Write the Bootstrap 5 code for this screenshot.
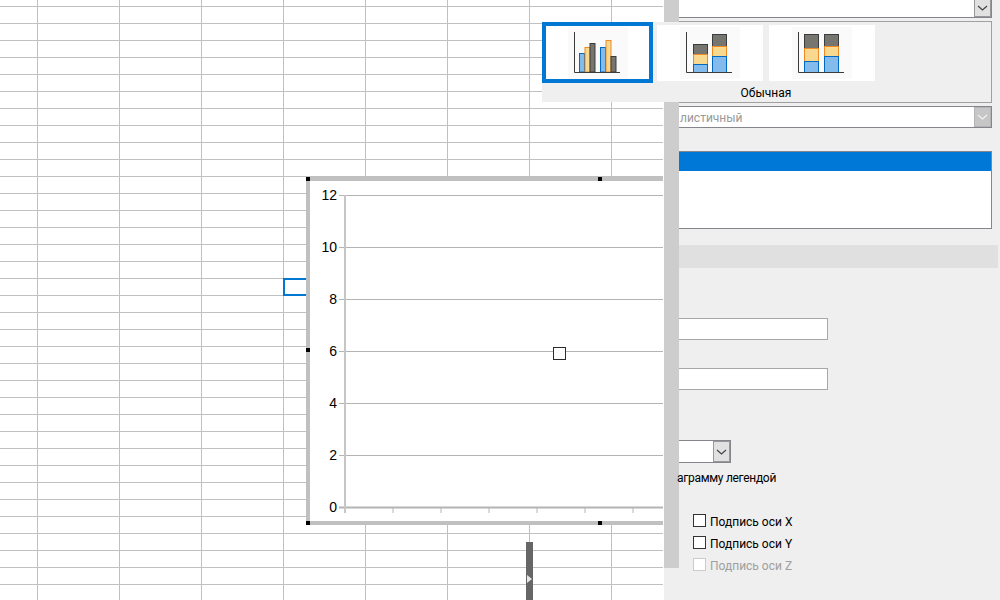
<!DOCTYPE html>
<html lang="ru">
<head>
<meta charset="utf-8">
<title>Диаграмма</title>
<link rel="stylesheet" href="https://cdn.jsdelivr.net/npm/bootstrap@5.3.0/dist/css/bootstrap.min.css">
<style>
html,body{margin:0;height:100%;overflow:hidden;background:#fff}
.app-root{width:1000px;height:600px;font-family:Roboto,"Noto Sans",sans-serif;font-size:12px;line-height:16px;color:#000;background:#fff}
.sheet-area{width:663px;height:600px;margin-right:1px;background-color:#fff;
 background-image:linear-gradient(to right,transparent 81px,#c0c0c0 81px),linear-gradient(to bottom,transparent 16px,#c0c0c0 16px);
 background-size:82px 100%,100% 17px;background-position:-44px 0,0 -10px}
.cell-cursor{left:283px;top:278px;width:30px;height:18px;border:2px solid #0078d4}
.chart-frame{left:306px;top:176px;width:400px;height:349px;background:#fff;border:solid #c0c0c0;border-width:5px 4px 4px 4px}
.chart-frame svg{display:block}
.chart-frame text{font-family:"Liberation Sans",sans-serif;font-size:14px;fill:#000;text-anchor:end}
.grab{width:4px;height:4px;background:#000}
.grab-tl{left:-4px;top:-4px}
.grab-tm{left:288px;top:-4px}
.grab-ml{left:-4px;top:167px}
.grab-bl{left:-4px;bottom:-4px}
.grab-bm{left:288px;bottom:-4px}
.data-point{left:553px;top:347px;width:13px;height:13px;background:#fff;border:1px solid #2b2b2b}
.split-bar{left:526px;top:542px;width:7px;height:58px;background:#666}
.split-bar svg{display:block;margin:33px 0 0 1px}
.side-panel{width:336px;height:600px;background:#efefef}
.fake-scroll{width:15px;height:568px;background:#cdcdcd;flex:none}
.side-body{width:313px;flex:none}
.combo-box{background:#fff;border:solid #85868c;border-width:1px 1px 1px 0;color:#999;padding-left:1px}
.combo-top{height:18px;border-top:0}
.combo-mid{height:22px;margin-top:3px}
.combo-mid span{padding-top:1px}
.combo-low{height:23px;width:52px;margin-top:50px}
.combo-btn{width:17px;background:#c6c6c6;border:1px solid #b4b4b6}
.combo-enabled .combo-btn{background:#e1e1e1;border-color:#98989c}
.combo-top .combo-btn{border-top:0}
.gallery-frame{height:82px;margin-top:3px;border:1px solid #a0a0a0;border-left:0}
.chart-list{height:78px;margin-top:23px;background:#fff;border:solid #85868c;border-width:1px 1px 1px 0}
.chart-list-active{height:19px;background:#0078d7}
.group-band{width:319px;height:23px;margin-top:16px;background:#e0e0e0}
.name-input.form-control{width:149px;height:22px;padding:0;border:solid #a8a8ac;border-width:1px 1px 1px 0;border-radius:0;background:#fff}
.name-first.form-control{margin-top:50px}
.name-second.form-control{margin-top:28px}
.legend-note{margin-top:7px;margin-left:-2px;height:16px;white-space:nowrap;letter-spacing:-.3px}
.axis-list{margin:28px 0 0 14px;gap:9px}
.axis-item{height:13px;gap:4px;line-height:13px}
.axis-item span{padding-top:3px}
.axis-item.disabled-item{color:#a0a0a0}
.tick-box.form-check-input{width:13px;height:13px;margin:0;border:1px solid #333;border-radius:0;background-color:#fff;opacity:1;flex:none}
.disabled-item .tick-box.form-check-input{border-color:#ccc}
.gallery-pop{left:542px;top:22px;width:448px;height:80px;background:#efefef}
.gallery-row{height:61px}
.gal-tile{background:#fff;flex:none}
.gal-selected{width:111px;height:61px;border:4px solid #0078d4}
.gal-plain{width:106px;height:56px;margin-top:3px}
.gal-second{margin-left:4px}
.gal-third{margin-left:6px}
.gal-tile svg{display:block;background:#fafafa}
.gal-selected svg{margin-top:1px}
.gal-plain svg{margin-top:2px}
.gal-title{height:19px;line-height:19px;padding-top:1px}
.bar-b{fill:#83bbec;stroke:#0369c0}
.bar-o{fill:#f9d88f;stroke:#f08a24}
.bar-g{fill:#77756f;stroke:#3c3c3c}
.axis-stroke{stroke:#3c3c3c;fill:none}
</style>
</head>
<body>
<div class="app-root position-relative d-flex overflow-hidden">
  <div class="sheet-area position-relative overflow-hidden flex-shrink-0">
    <div class="cell-cursor position-absolute"></div>
    <div class="chart-frame position-absolute">
      <svg width="396" height="340" viewBox="310 181 396 340" aria-label="Chart">
        <g stroke="#b4b4b4" stroke-width="1">
          <path d="M339 195.5H706M339 247.5H706M339 299.5H706M339 351.5H706M339 403.5H706M339 455.5H706"/>
          <path d="M339 507.5H706" stroke-width="2"/>
          <path d="M345 195V513" stroke-width="2" stroke="#c6c6c6"/>
          <path d="M393 507V513M441 507V513M489 507V513M537 507V513M585 507V513M633 507V513M681 507V513"/>
        </g>
        <text x="337" y="200">12</text>
        <text x="337" y="252">10</text>
        <text x="337" y="304">8</text>
        <text x="337" y="356">6</text>
        <text x="337" y="408">4</text>
        <text x="337" y="460">2</text>
        <text x="337" y="512">0</text>
      </svg>
      <span class="grab grab-tl position-absolute"></span>
      <span class="grab grab-tm position-absolute"></span>
      <span class="grab grab-ml position-absolute"></span>
      <span class="grab grab-bl position-absolute"></span>
      <span class="grab grab-bm position-absolute"></span>
    </div>
    <div class="data-point position-absolute"></div>
    <div class="split-bar position-absolute">
      <svg width="5" height="8" viewBox="0 0 5 8"><path d="M0 0L5 4L0 8Z" fill="#e6e6e6"/></svg>
    </div>
  </div>

  <div class="side-panel d-flex flex-shrink-0">
    <div class="fake-scroll"></div>
    <div class="side-body d-flex flex-column">
      <div class="combo-box combo-top combo-enabled d-flex justify-content-end">
        <div class="combo-btn d-flex align-items-center justify-content-center">
          <svg width="11" height="6" viewBox="0 0 11 6"><path d="M1 1L5.5 5L10 1" fill="none" stroke="#444" stroke-width="1.2"/></svg>
        </div>
      </div>
      <div class="gallery-frame"></div>
      <div class="combo-box combo-mid d-flex justify-content-between align-items-center">
        <span>листичный</span>
        <div class="combo-btn h-100 d-flex align-items-center justify-content-center">
          <svg width="11" height="6" viewBox="0 0 11 6"><path d="M1 1L5.5 5L10 1" fill="none" stroke="#f2f2f2" stroke-width="1.2"/></svg>
        </div>
      </div>
      <div class="chart-list"><div class="chart-list-active"></div></div>
      <div class="group-band"></div>
      <input class="form-control name-input name-first" type="text" aria-label="Название">
      <input class="form-control name-input name-second" type="text" aria-label="Подзаголовок">
      <div class="combo-box combo-low combo-enabled d-flex justify-content-end">
        <div class="combo-btn d-flex align-items-center justify-content-center">
          <svg width="11" height="6" viewBox="0 0 11 6"><path d="M1 1L5.5 5L10 1" fill="none" stroke="#444" stroke-width="1.2"/></svg>
        </div>
      </div>
      <div class="legend-note">аграмму легендой</div>
      <div class="axis-list d-flex flex-column">
        <label class="axis-item d-flex align-items-center"><input class="form-check-input tick-box" type="checkbox"><span>Подпись оси X</span></label>
        <label class="axis-item d-flex align-items-center"><input class="form-check-input tick-box" type="checkbox"><span>Подпись оси Y</span></label>
        <label class="axis-item disabled-item d-flex align-items-center"><input class="form-check-input tick-box" type="checkbox" disabled><span>Подпись оси Z</span></label>
      </div>
    </div>
  </div>

  <div class="gallery-pop position-absolute">
    <div class="gallery-row d-flex">
      <div class="gal-tile gal-selected d-flex justify-content-center">
        <svg width="60" height="52" viewBox="0 -1 60 52">
          <rect class="bar-b" x="11.5" y="25.5" width="5" height="18.5"/>
          <rect class="bar-o" x="17" y="19.5" width="5" height="24.5"/>
          <rect class="bar-g" x="22" y="15.5" width="5" height="28.5"/>
          <rect class="bar-b" x="32.5" y="19.5" width="5" height="24.5"/>
          <rect class="bar-o" x="38" y="12.5" width="5" height="31.5"/>
          <rect class="bar-g" x="43" y="28.5" width="5" height="15.5"/>
          <path class="axis-stroke" d="M6.5 4V44.5H52"/>
        </svg>
      </div>
      <div class="gal-tile gal-plain gal-second d-flex justify-content-center">
        <svg width="60" height="52" viewBox="0 -1 60 52">
          <rect class="bar-g" x="13.5" y="16.5" width="14" height="10"/>
          <rect class="bar-o" x="13.5" y="26.5" width="14" height="10"/>
          <rect class="bar-b" x="13.5" y="36.5" width="14" height="8"/>
          <rect class="bar-g" x="32.5" y="6.5" width="14" height="12"/>
          <rect class="bar-o" x="32.5" y="18.5" width="14" height="10"/>
          <rect class="bar-b" x="32.5" y="28.5" width="14" height="16"/>
          <path class="axis-stroke" d="M6.5 4V44.5H52"/>
        </svg>
      </div>
      <div class="gal-tile gal-plain gal-third d-flex justify-content-center">
        <svg width="60" height="52" viewBox="0 -1 60 52">
          <rect class="bar-g" x="12.5" y="6.5" width="14" height="14"/>
          <rect class="bar-o" x="12.5" y="20.5" width="14" height="13"/>
          <rect class="bar-b" x="12.5" y="33.5" width="14" height="11"/>
          <rect class="bar-g" x="32.5" y="6.5" width="14" height="12"/>
          <rect class="bar-o" x="32.5" y="18.5" width="14" height="10"/>
          <rect class="bar-b" x="32.5" y="28.5" width="14" height="16"/>
          <path class="axis-stroke" d="M6.5 4V44.5H52"/>
        </svg>
      </div>
    </div>
    <div class="gal-title text-center">Обычная</div>
  </div>
</div>
<script src="https://cdn.jsdelivr.net/npm/bootstrap@5.3.0/dist/js/bootstrap.bundle.min.js"></script>
</body>
</html>
